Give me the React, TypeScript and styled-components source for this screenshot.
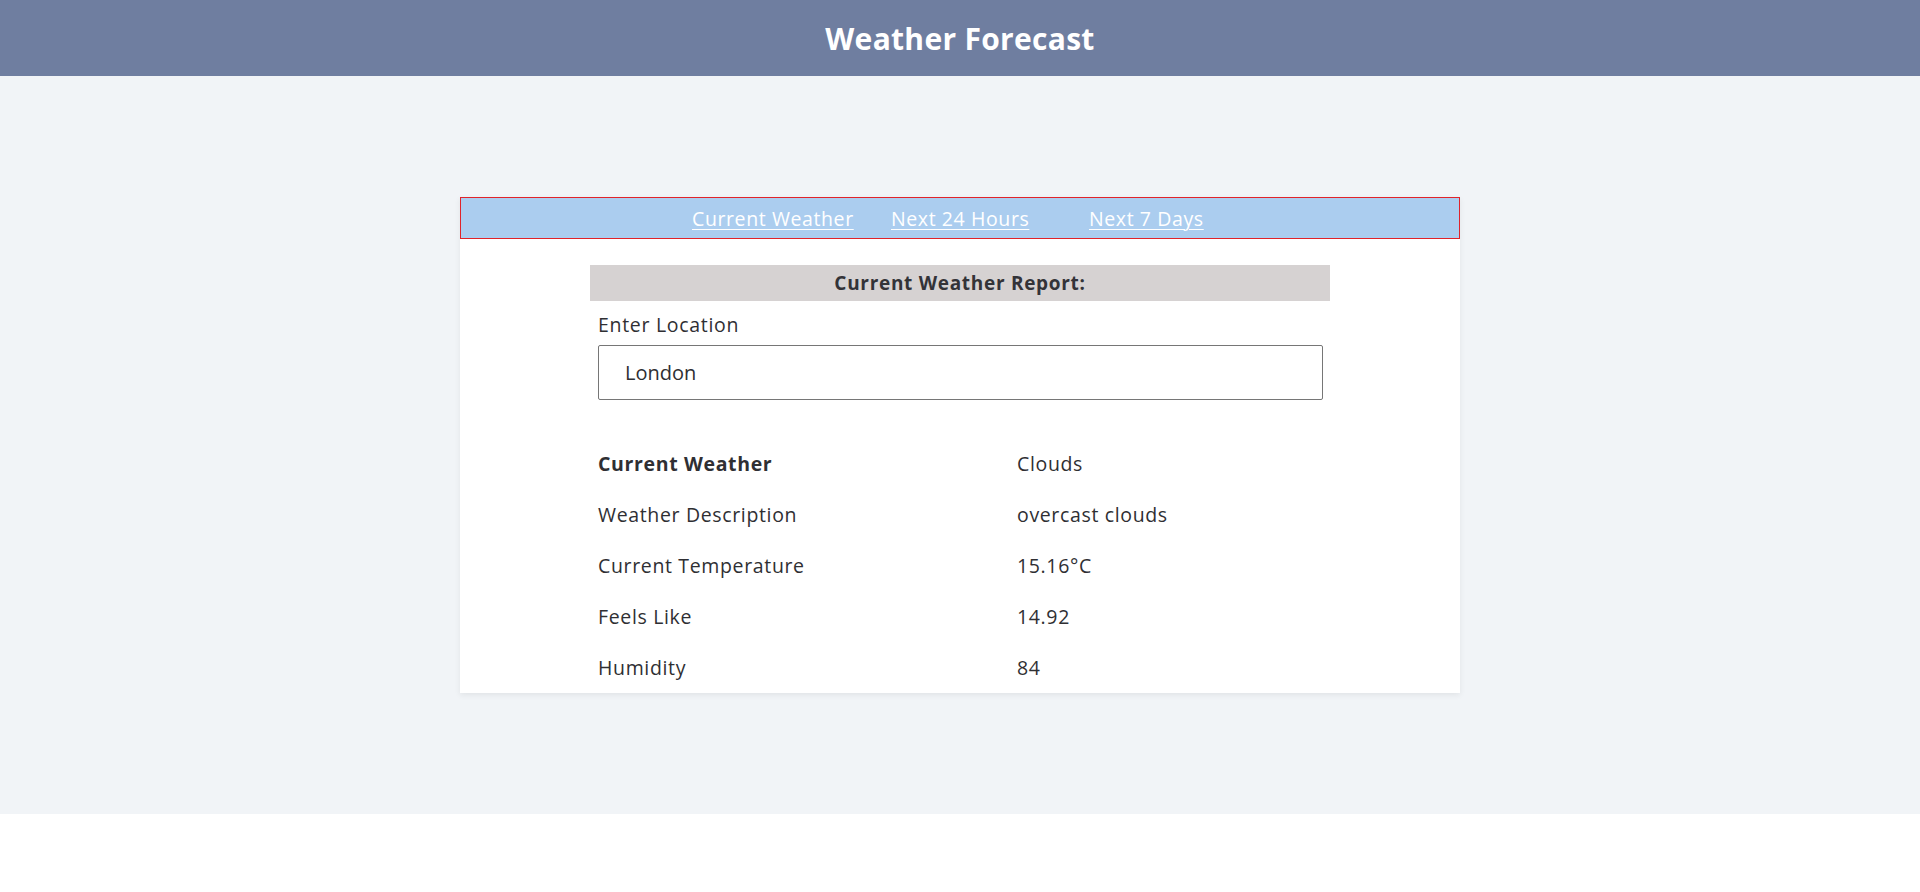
import { createGlobalStyle } from 'styled-components'
import styled from 'styled-components'

const GlobalStyle = createGlobalStyle`
  html, body {
    margin: 0;
    padding: 0;
    background: #ffffff;
    font-family: "Open Sans", Lato, sans-serif;
    color: #2f2f33;
  }
`

const Header = styled.header`
  height: 76px;
  background: #6f7ea0;
  display: flex;
  align-items: center;
  justify-content: center;
`

const Title = styled.h1`
  margin: 0;
  color: #ffffff;
  font-size: 30px;
  font-weight: 700;
  letter-spacing: 0.3px;
`

const Main = styled.main`
  background: #f1f4f7;
  padding: 121px 0;
  display: flex;
  justify-content: center;
`

const Card = styled.section`
  width: 1000px;
  background: #ffffff;
  box-shadow: 0 2px 6px rgba(0, 0, 0, 0.07);
`

const Tabs = styled.nav`
  height: 42px;
  box-sizing: border-box;
  background: #abcdef;
  border: 1px solid #e0232a;
  display: flex;
  align-items: center;
  padding-left: 231px;
`

const TabItem = styled.div<{ $width?: number }>`
  width: ${(p) => (p.$width ? `${p.$width}px` : 'auto')};
`

const TabLink = styled.a`
  color: #ffffff;
  font-size: 19.5px;
  letter-spacing: 0.6px;
  text-decoration: underline;
  text-underline-offset: 3px;
  text-decoration-thickness: 1px;
  cursor: pointer;
`

const Report = styled.div`
  width: 740px;
  margin: 26px auto 0;
`

const ReportTitle = styled.h2`
  margin: 0;
  height: 36px;
  background: #d6d2d2;
  display: flex;
  align-items: center;
  justify-content: center;
  font-size: 19px;
  font-weight: 700;
  letter-spacing: 0.7px;
  color: #333338;
`

const Form = styled.div`
  padding: 12px 7px 0 8px;
`

const Label = styled.label`
  display: block;
  font-size: 19.5px;
  letter-spacing: 0.7px;
  line-height: 24px;
  margin-bottom: 8px;
`

const Input = styled.input`
  box-sizing: border-box;
  width: 100%;
  height: 55px;
  border: 1px solid #767676;
  border-radius: 2px;
  padding: 0 26px;
  font-family: inherit;
  font-size: 20px;
  color: #2f2f33;
  outline: none;
`

const Table = styled.div`
  display: grid;
  grid-template-columns: 419px 1fr;
  margin-top: 38px;
  padding-left: 8px;
`

const Cell = styled.div<{ $bold?: boolean }>`
  height: 51px;
  display: flex;
  align-items: center;
  font-size: 19.5px;
  letter-spacing: 0.65px;
  font-weight: ${(p) => (p.$bold ? 700 : 400)};
`

const rows: [string, string][] = [
  ['Current Weather', 'Clouds'],
  ['Weather Description', 'overcast clouds'],
  ['Current Temperature', '15.16°C'],
  ['Feels Like', '14.92'],
  ['Humidity', '84'],
]

export default function App() {
  return (
    <>
      <GlobalStyle />
      <Header>
        <Title>Weather Forecast</Title>
      </Header>
      <Main>
        <Card>
          <Tabs>
            <TabItem $width={199}>
              <TabLink>Current Weather</TabLink>
            </TabItem>
            <TabItem $width={198}>
              <TabLink>Next 24 Hours</TabLink>
            </TabItem>
            <TabItem>
              <TabLink>Next 7 Days</TabLink>
            </TabItem>
          </Tabs>
          <Report>
            <ReportTitle>Current Weather Report:</ReportTitle>
            <Form>
              <Label>Enter Location</Label>
              <Input defaultValue="London" />
            </Form>
            <Table>
              {rows.map(([k, v], i) => (
                <>
                  <Cell key={k} $bold={i === 0}>{k}</Cell>
                  <Cell key={k + 'v'}>{v}</Cell>
                </>
              ))}
            </Table>
          </Report>
        </Card>
      </Main>
    </>
  )
}
